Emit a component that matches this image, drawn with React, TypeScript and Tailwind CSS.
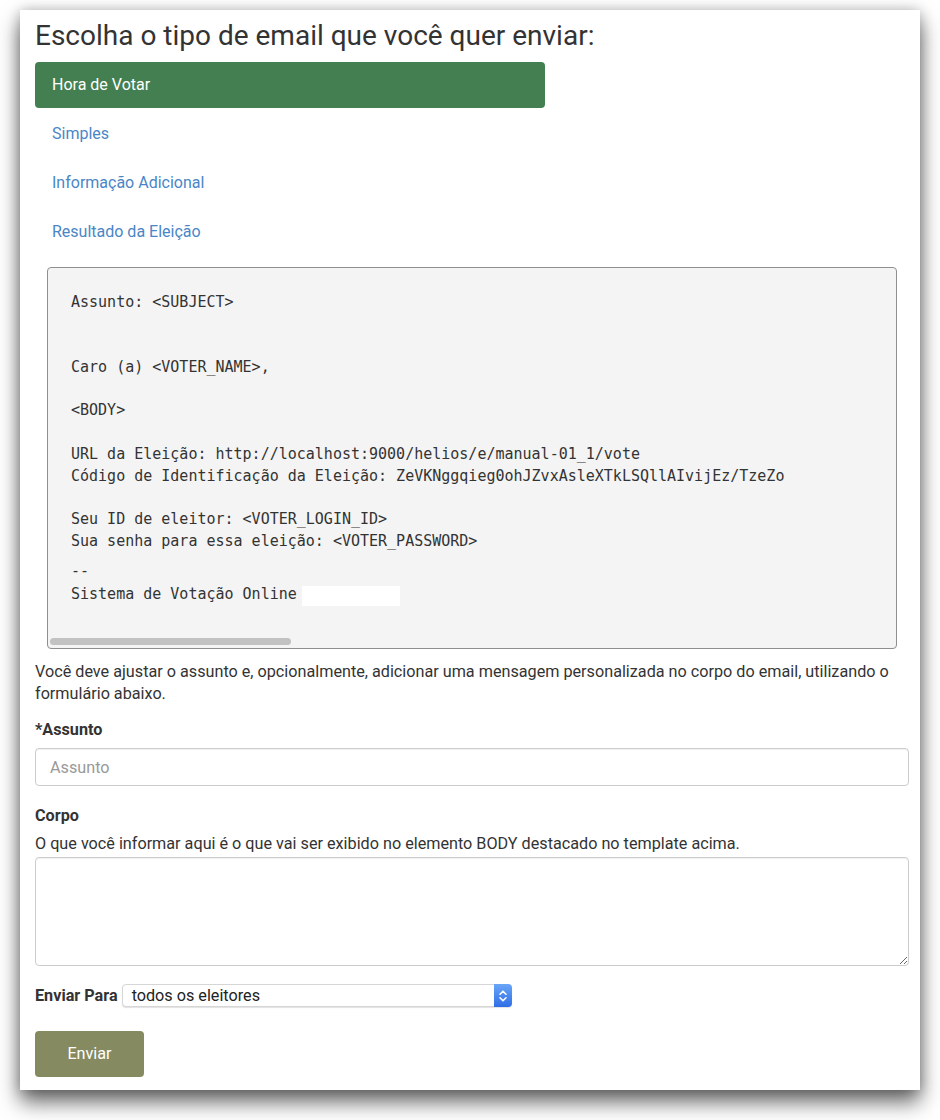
import React from "react";

const monoLines: string[] = [
  "Assunto: <SUBJECT>",
  "",
  "",
  "Caro (a) <VOTER_NAME>,",
  "",
  "<BODY>",
  "",
  "URL da Eleição: http://localhost:9000/helios/e/manual-01_1/vote",
  "Código de Identificação da Eleição: ZeVKNggqieg0ohJZvxAsleXTkLSQllAIvijEz/TzeZo",
  "",
  "Seu ID de eleitor: <VOTER_LOGIN_ID>",
  "Sua senha para essa eleição: <VOTER_PASSWORD>",
];

export default function App() {
  return (
    <div
      className="min-h-[1120px] bg-white pt-[10px] pl-[20px] text-[#333]"
      style={{ fontFamily: "Roboto, 'Noto Sans', sans-serif" }}
    >
      <div className="w-[900px] h-[1080px] bg-white px-[15px] pt-[10px] shadow-[0_12px_20px_rgba(0,0,0,0.6),0_0_12px_rgba(0,0,0,0.22)]">
        <h2 className="text-[28px] leading-[32px] font-normal text-[#333]">
          Escolha o tipo de email que você quer enviar:
        </h2>

        <ul className="mt-[10px] w-[510px] flex flex-col gap-[3px]">
          <li className="h-[46px] rounded-[4px] bg-[#437f51] text-white text-[16px] leading-[46px] pl-[17px]">
            Hora de Votar
          </li>
          <li className="h-[46px] text-[#4a86c6] text-[16px] leading-[46px] pl-[17px]">Simples</li>
          <li className="h-[46px] text-[#4a86c6] text-[16px] leading-[46px] pl-[17px]">
            Informação Adicional
          </li>
          <li className="h-[46px] text-[#4a86c6] text-[16px] leading-[46px] pl-[17px]">
            Resultado da Eleição
          </li>
        </ul>

        <div
          className="relative mt-[12px] ml-[12px] w-[850px] h-[382px] overflow-hidden rounded-[4px] border border-[#8f8f8f] bg-[#f4f4f4] pl-[23px] pt-[24px] text-[15px] leading-[21.7px] text-[#333] whitespace-pre"
          style={{ fontFamily: "'DejaVu Sans Mono', 'Liberation Mono', monospace" }}
        >
          {monoLines.map((l, i) => (
            <div key={i} className="h-[21.7px]">
              {l}
            </div>
          ))}
          <div className="mt-[9px] h-[21.7px]">--</div>
          <div className="mt-[1px] h-[21.7px] flex items-center">
            <span>Sistema de Votação Online</span>
            <span className="ml-[5px] inline-block w-[98px] h-[20px] bg-white mt-[3px]" />
          </div>
          <div className="absolute left-[2px] bottom-[3px] w-[241px] h-[7px] rounded-full bg-[#c2c2c2]" />
        </div>

        <p className="mt-[12px] text-[16.2px] leading-[22px] text-[#333]">
          Você deve ajustar o assunto e, opcionalmente, adicionar uma mensagem personalizada no corpo do email, utilizando o
          formulário abaixo.
        </p>

        <div className="mt-[14px] text-[16.2px] leading-[22px] font-bold text-[#333]">*Assunto</div>
        <input
          placeholder="Assunto"
          className="mt-[7px] block w-[874px] h-[38px] rounded-[4px] border border-[#cccccc] px-[14px] text-[16.2px] text-[#555] placeholder:text-[#999] outline-none shadow-[inset_0_1px_1px_rgba(0,0,0,0.06)]"
        />

        <div className="mt-[19px] text-[16.2px] leading-[22px] font-bold text-[#333]">Corpo</div>
        <div className="mt-[6px] text-[16.2px] leading-[22px] text-[#333]">
          O que você informar aqui é o que vai ser exibido no elemento BODY destacado no template acima.
        </div>
        <textarea className="mt-[2px] block w-[874px] h-[109px] rounded-[4px] border border-[#cccccc] outline-none shadow-[inset_0_1px_1px_rgba(0,0,0,0.06)]" />

        <div className="mt-[18px] flex items-center h-[23px]">
          <span className="text-[16.2px] font-bold text-[#333] leading-[22px]">Enviar Para</span>
          <div className="ml-[4px] w-[390px] h-[23px] flex items-stretch rounded-[4px] bg-white border border-[#d6d6d6] shadow-[0_1px_1px_rgba(0,0,0,0.12)]">
            <span className="flex-1 pl-[9px] text-[16.2px] leading-[21px] text-[#222]">todos os eleitores</span>
            <span className="w-[18px] -my-[1px] -mr-[1px] rounded-r-[4px] bg-gradient-to-b from-[#6aa6f7] to-[#2f6de6] flex items-center justify-center">
              <svg width="10" height="14" viewBox="0 0 10 14" fill="none" stroke="white" strokeWidth="1.6" strokeLinecap="round" strokeLinejoin="round">
                <path d="M2 5.2 L5 2.2 L8 5.2" />
                <path d="M2 8.8 L5 11.8 L8 8.8" />
              </svg>
            </span>
          </div>
        </div>

        <button className="mt-[24px] block w-[109px] h-[46px] rounded-[4px] bg-[#858a60] text-white text-[16.2px]">
          Enviar
        </button>
      </div>
    </div>
  );
}
